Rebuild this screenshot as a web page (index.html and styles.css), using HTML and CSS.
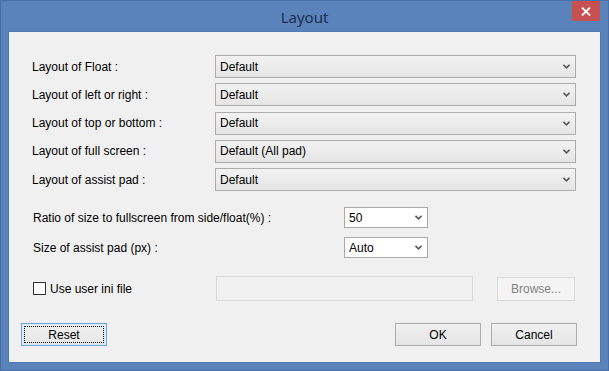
FILE: index.html
```html
<!DOCTYPE html>
<html lang="en">
<head>
  <meta charset="UTF-8" />
  <title>Layout</title>
  <link rel="stylesheet" href="styles.css">
</head>
<body>
  <div class="window">
    <div class="titlebar">
      <span></span>
      <span class="title">Layout</span>
      <span class="close">
        <svg width="10" height="9" viewBox="0 0 10 9"><path d="M1 0.5 L9 8.5 M9 0.5 L1 8.5" stroke="#fff" stroke-width="1.8"/></svg>
      </span>
    </div>

    <div class="client">
      <div class="layouts">
        <label>Layout of Float :</label>
        <div class="combo"><span>Default</span><svg class="chev" width="7" height="5" viewBox="0 0 7 5"><path d="M0.5 0.8 L3.5 3.8 L6.5 0.8" stroke="#5a5a5a" stroke-width="1.6" fill="none"/></svg></div>
        <label>Layout of left or right :</label>
        <div class="combo"><span>Default</span><svg class="chev" width="7" height="5" viewBox="0 0 7 5"><path d="M0.5 0.8 L3.5 3.8 L6.5 0.8" stroke="#5a5a5a" stroke-width="1.6" fill="none"/></svg></div>
        <label>Layout of top or bottom :</label>
        <div class="combo"><span>Default</span><svg class="chev" width="7" height="5" viewBox="0 0 7 5"><path d="M0.5 0.8 L3.5 3.8 L6.5 0.8" stroke="#5a5a5a" stroke-width="1.6" fill="none"/></svg></div>
        <label>Layout of full screen :</label>
        <div class="combo"><span>Default (All pad)</span><svg class="chev" width="7" height="5" viewBox="0 0 7 5"><path d="M0.5 0.8 L3.5 3.8 L6.5 0.8" stroke="#5a5a5a" stroke-width="1.6" fill="none"/></svg></div>
        <label>Layout of assist pad :</label>
        <div class="combo"><span>Default</span><svg class="chev" width="7" height="5" viewBox="0 0 7 5"><path d="M0.5 0.8 L3.5 3.8 L6.5 0.8" stroke="#5a5a5a" stroke-width="1.6" fill="none"/></svg></div>
      </div>

      <div class="sizes">
        <label>Ratio of size to fullscreen from side/float(%) :</label>
        <div class="combo white"><span>50</span><svg class="chev" width="7" height="5" viewBox="0 0 7 5"><path d="M0.5 0.8 L3.5 3.8 L6.5 0.8" stroke="#5a5a5a" stroke-width="1.6" fill="none"/></svg></div>
        <label>Size of assist pad (px) :</label>
        <div class="combo white"><span>Auto</span><svg class="chev" width="7" height="5" viewBox="0 0 7 5"><path d="M0.5 0.8 L3.5 3.8 L6.5 0.8" stroke="#5a5a5a" stroke-width="1.6" fill="none"/></svg></div>
      </div>

      <div class="ini">
        <label class="check"><span class="box"></span>Use user ini file</label>
        <div class="path"></div>
        <div class="btn disabled">Browse...</div>
      </div>

      <div class="actions">
        <div class="btn focused"><span>Reset</span></div>
        <div class="spacer"></div>
        <div class="btn">OK</div>
        <div class="btn">Cancel</div>
      </div>
    </div>
  </div>
</body>
</html>
```

FILE: styles.css
```css
body {
  margin: 0;
  background: #5a83bc;
  font-family: "Liberation Sans", Arial, sans-serif;
  font-size: 12px;
  color: #000;
}
.window {
  width: 609px;
  height: 371px;
  box-sizing: border-box;
  background: #5a83bc;
  border: 1px solid #4a6fa6;
  display: flex;
  flex-direction: column;
}
.titlebar {
  height: 30px;
  display: grid;
  grid-template-columns: 1fr auto 1fr;
}
.title {
  font-family: "Noto Sans", sans-serif;
  font-size: 15px;
  color: #1e2f4d;
  line-height: 32px;
}
.close {
  justify-self: end;
  width: 28px;
  height: 20px;
  margin-right: 8px;
  background: #c75050;
  display: flex;
  align-items: center;
  justify-content: center;
}
.client {
  margin: 0 7px 7px;
  flex: 1;
  background: #f0f0f0;
  border: 1px solid #5079b2;
  box-sizing: border-box;
  display: flex;
  flex-direction: column;
}
.layouts {
  display: grid;
  grid-template-columns: 183px 361px;
  grid-auto-rows: 23px;
  row-gap: 5.25px;
  margin: 23px 0 0 23px;
  align-items: center;
}
.combo {
  height: 23px;
  box-sizing: border-box;
  border: 1px solid #acacac;
  background: linear-gradient(#f2f2f2, #e5e5e5);
  display: flex;
  align-items: center;
  justify-content: space-between;
  padding: 0 5px 0 4px;
}
.combo.white {
  height: 21px;
  background: #fff;
  border-color: #a9a9a9;
}
.sizes {
  display: grid;
  grid-template-columns: 311px 84px;
  grid-auto-rows: 21px;
  row-gap: 9px;
  margin: 16px 0 0 24px;
  align-items: center;
}
.ini {
  display: flex;
  align-items: center;
  margin: 18px 0 0 24px;
  height: 25px;
}
.check {
  width: 183px;
  display: flex;
  align-items: center;
}
.box {
  width: 13px;
  height: 13px;
  box-sizing: border-box;
  border: 1px solid #333;
  background: #fff;
  margin-right: 4px;
}
.path {
  width: 257px;
  height: 25px;
  box-sizing: border-box;
  border: 1px solid #d9d9d9;
  background: #f0f0f0;
}
.btn {
  height: 23px;
  box-sizing: border-box;
  border: 1px solid #acacac;
  background: linear-gradient(#f0f0f0, #e5e5e5);
  display: flex;
  align-items: center;
  justify-content: center;
  width: 86px;
}
.btn.disabled {
  width: 78px;
  height: 24px;
  margin-left: 24px;
  border-color: #d9d9d9;
  background: #f4f4f4;
  color: #838383;
}
.btn.focused {
  border-color: #6fa6de;
  box-shadow: inset 0 0 0 1px #d6e9fc;
  padding: 2px;
}
.btn.focused span {
  flex: 1;
  align-self: stretch;
  display: flex;
  align-items: center;
  justify-content: center;
  border: 1px dotted #000;
}
.actions {
  display: flex;
  gap: 10px;
  margin: 22px 23px 0 12px;
}
.spacer {
  flex: 1;
}
```
